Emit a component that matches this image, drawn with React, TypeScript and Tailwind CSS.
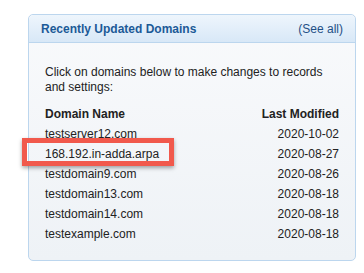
import React from 'react';

const rows = [
  { name: 'testserver12.com', date: '2020-10-02' },
  { name: '168.192.in-adda.arpa', date: '2020-08-27', marked: true },
  { name: 'testdomain9.com', date: '2020-08-26' },
  { name: 'testdomain13.com', date: '2020-08-18' },
  { name: 'testdomain14.com', date: '2020-08-18' },
  { name: 'testexample.com', date: '2020-08-18' },
];

const App = () => {
  return (
    <div className="w-[364px] h-[273px] bg-white pt-[14px] pl-[28px] font-['Liberation_Sans',Arial,sans-serif]">
      <div className="w-[328px] h-[247px] rounded-[5px] border border-[#bcd6ee] bg-gradient-to-b from-[#f9fafc] to-[#eef2f6] flex flex-col overflow-visible">
        {/* Header */}
        <div className="h-[28px] shrink-0 flex items-center justify-between px-[12px] rounded-t-[5px] border-b border-[#bcd6ee] bg-gradient-to-b from-[#eef5fc] to-[#d8e8f7]">
          <h2 className="text-[12px] font-bold text-[#1c5a97]">Recently Updated Domains</h2>
          <a className="text-[12px] text-[#1f4f86]">(See all)</a>
        </div>

        {/* Body */}
        <div className="flex-1 pt-[22px] pl-[16px] pr-[16px] text-[12px] leading-[15px] text-[#222]">
          <p>Click on domains below to make changes to records and settings:</p>

          <div className="mt-[10px] flex flex-col">
            <div className="h-[19px] flex items-center justify-between font-bold">
              <span>Domain Name</span>
              <span>Last Modified</span>
            </div>
            {rows.map((r) => (
              <div key={r.name} className="relative h-[20px] flex items-center justify-between">
                <span>{r.name}</span>
                <span>{r.date}</span>
                {r.marked && (
                  <div className="absolute left-[-23px] top-[-6px] w-[152px] h-[28px] border-[5px] border-[#f1594c] shadow-[0_2px_4px_rgba(0,0,0,0.35)] pointer-events-none" />
                )}
              </div>
            ))}
          </div>
        </div>
      </div>
    </div>
  );
};

export default App;
